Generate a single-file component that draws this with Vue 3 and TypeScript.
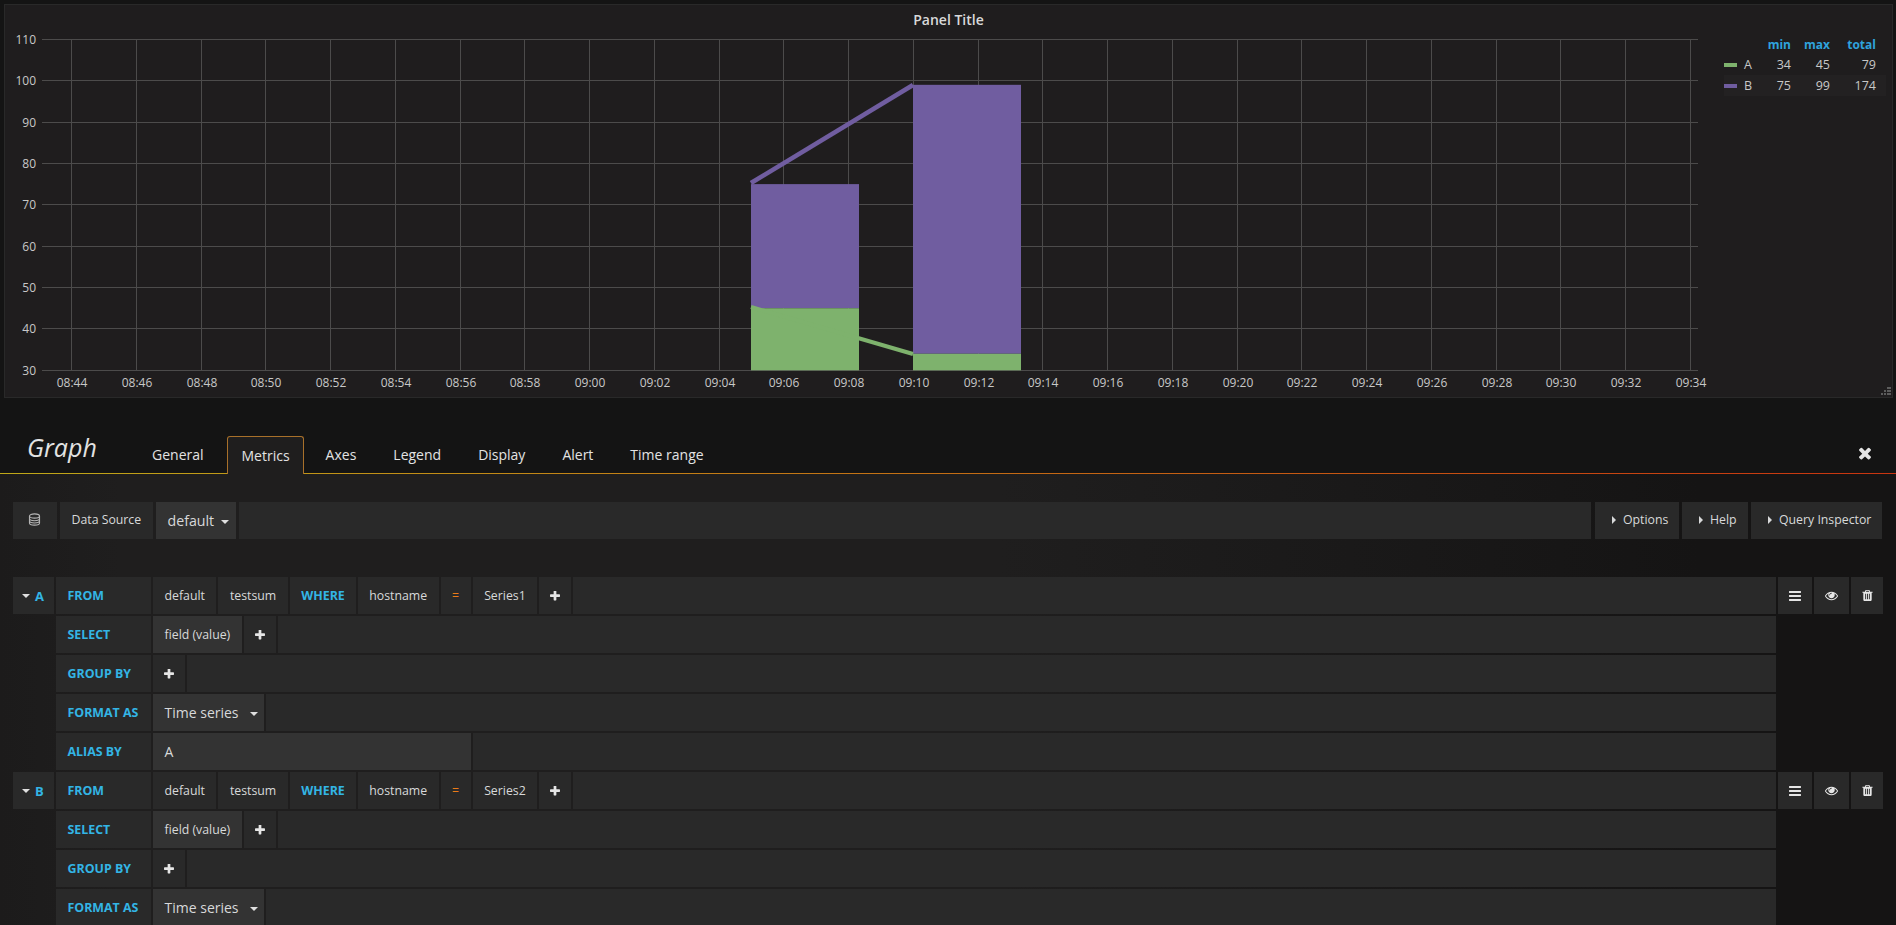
<template>
  <div class="page">
    <section class="panel">
      <div class="panel-title">Panel Title</div>
      <div class="graph-wrap">
        <svg class="chart" width="1705" height="365" viewBox="5 28 1705 365">
          <g class="grid">
            <line v-for="t in yTicks" :key="'h' + t.label" x1="42" x2="1698" :y1="t.y" :y2="t.y" />
            <line v-for="t in xTicks" :key="'v' + t.label" :x1="t.x" :x2="t.x" y1="39" y2="370" />
          </g>
          <g class="labels">
            <text v-for="t in yTicks" :key="'yl' + t.label" x="36" :y="t.y + 4" text-anchor="end">{{ t.label }}</text>
            <text v-for="t in xTicks" :key="'xl' + t.label" :x="t.x + 0.5" y="387" text-anchor="middle">{{ t.label }}</text>
          </g>
          <rect v-for="b in bars" :key="b.key" :x="b.x" :y="b.y" :width="108" :height="b.h" :fill="b.fill" />
          <polyline class="line-b" points="751,183 913,85" />
          <polyline class="line-a" points="751,307 913,354" />
        </svg>
        <div class="legend">
          <div class="legend-row legend-head">
            <span class="lg-name"></span>
            <span class="lg-num lg-min">min</span>
            <span class="lg-num lg-max">max</span>
            <span class="lg-num lg-total">total</span>
          </div>
          <div v-for="s in legend" :key="s.name" class="legend-row" :class="{ alt: s.alt }">
            <span class="lg-name"><i class="swatch" :class="s.swatch"></i>{{ s.name }}</span>
            <span class="lg-num lg-min">{{ s.min }}</span>
            <span class="lg-num lg-max">{{ s.max }}</span>
            <span class="lg-num lg-total">{{ s.total }}</span>
          </div>
        </div>
      </div>
      <svg class="resize" width="14" height="14" viewBox="0 0 14 14">
        <g fill="#5c5c5c">
          <rect x="9" y="4" width="2" height="2" /><rect x="11" y="4" width="2" height="2" />
          <rect x="6" y="7" width="2" height="2" /><rect x="9" y="7" width="2" height="2" /><rect x="11" y="7" width="2" height="2" />
          <rect x="3" y="10" width="2" height="2" /><rect x="6" y="10" width="2" height="2" /><rect x="9" y="10" width="2" height="2" /><rect x="11" y="10" width="2" height="2" />
        </g>
      </svg>
    </section>

    <header class="edit-head">
      <div class="edit-title">Graph</div>
      <nav class="tabs">
        <a v-for="t in tabs" :key="t" class="tab" :class="{ active: t === 'Metrics' }">{{ t }}</a>
      </nav>
      <svg class="close" width="18" height="18" viewBox="0 0 1792 1792">
        <path fill="#e6e6e6" d="M1490 1322q0 40-28 68l-136 136q-28 28-68 28t-68-28l-294-294-294 294q-28 28-68 28t-68-28l-136-136q-28-28-28-68t28-68l294-294-294-294q-28-28-28-68t28-68l136-136q28-28 68-28t68 28l294 294 294-294q28-28 68-28t68 28l136 136q28 28 28 68t-28 68l-294 294 294 294q28 28 28 68z" />
      </svg>
    </header>

    <main class="edit-body">
      <div class="toolbar">
        <div class="cell ds-icon">
          <svg width="13" height="13" viewBox="0 0 14 14" fill="none" stroke="#b4b4b4" stroke-width="1.2">
            <ellipse cx="7" cy="3.2" rx="5.4" ry="2.3" />
            <path d="M1.6 3.2v7.6c0 1.3 2.4 2.3 5.4 2.3s5.4-1 5.4-2.3V3.2" />
            <path d="M1.6 6c0 1.3 2.4 2.3 5.4 2.3S12.4 7.3 12.4 6" />
            <path d="M1.6 8.4c0 1.3 2.4 2.3 5.4 2.3s5.4-1 5.4-2.3" />
          </svg>
        </div>
        <div class="cell ds-label">Data Source</div>
        <div class="cell select ds-select">default<i class="caret-down"></i></div>
        <div class="cell filler"></div>
        <div class="cell tb-btn tb-options"><i class="caret-right"></i>Options</div>
        <div class="cell tb-btn tb-help"><i class="caret-right"></i>Help</div>
        <div class="cell tb-btn tb-inspector"><i class="caret-right"></i>Query Inspector</div>
      </div>

      <div class="queries">
        <div v-for="q in queries" :key="q.ref" class="query">
          <div v-for="(row, ri) in rowsOf(q)" :key="row.label" class="row">
            <div class="ref">
              <div v-if="ri === 0" class="cell ref-cell"><i class="caret-down small"></i>{{ q.ref }}</div>
            </div>
            <div class="cell key">{{ row.label }}</div>
            <template v-for="(c, ci) in row.cells" :key="ci">
              <div v-if="c.kind === 'plus'" class="cell plus">
                <svg width="10" height="10" viewBox="190 190 1412 1412">
                  <path fill="#e6e6e6" d="M1600 736v192q0 40-28 68t-68 28h-416v416q0 40-28 68t-68 28h-192q-40 0-68-28t-28-68v-416h-416q-40 0-68-28t-28-68v-192q0-40 28-68t68-28h416v-416q0-40 28-68t68-28h192q40 0 68 28t28 68v416h416q40 0 68 28t28 68z" />
                </svg>
              </div>
              <div v-else class="cell" :class="c.kind">{{ c.text }}<i v-if="c.kind === 'format'" class="caret-down"></i></div>
            </template>
            <div class="cell filler"></div>
            <div class="actions">
              <template v-if="ri === 0">
                <div class="cell act act-menu">
                  <svg width="12" height="12" viewBox="128 256 1536 1280">
                    <path fill="#e6e6e6" d="M1664 1344v128q0 26-19 45t-45 19h-1408q-26 0-45-19t-19-45v-128q0-26 19-45t45-19h1408q26 0 45 19t19 45zm0-512v128q0 26-19 45t-45 19h-1408q-26 0-45-19t-19-45v-128q0-26 19-45t45-19h1408q26 0 45 19t19 45zm0-512v128q0 26-19 45t-45 19h-1408q-26 0-45-19t-19-45v-128q0-26 19-45t45-19h1408q26 0 45 19t19 45z" />
                  </svg>
                </div>
                <div class="cell act act-eye">
                  <svg width="13" height="13" viewBox="0 0 1792 1792">
                    <path fill="#e6e6e6" d="M1664 960q-152-236-381-353 61 104 61 225 0 185-131.5 316.5t-316.5 131.5-316.5-131.5-131.5-316.5q0-121 61-225-229 117-381 353 133 205 333.5 326.5t434.5 121.5 434.5-121.5 333.5-326.5zm-720-384q0-20-14-34t-34-14q-125 0-214.5 89.5t-89.5 214.5q0 20 14 34t34 14 34-14 14-34q0-86 61-147t147-61q20 0 34-14t14-34zm848 384q0 34-20 69-140 230-376.5 368.5t-499.5 138.5-499.5-139-376.5-368q-20-35-20-69t20-69q140-229 376.5-368t499.5-139 499.5 139 376.5 368q20 35 20 69z" />
                  </svg>
                </div>
                <div class="cell act act-trash">
                  <svg width="13" height="13" viewBox="0 0 1792 1792">
                    <path fill="#e6e6e6" d="M704 1376v-704q0-14-9-23t-23-9h-64q-14 0-23 9t-9 23v704q0 14 9 23t23 9h64q14 0 23-9t9-23zm256 0v-704q0-14-9-23t-23-9h-64q-14 0-23 9t-9 23v704q0 14 9 23t23 9h64q14 0 23-9t9-23zm256 0v-704q0-14-9-23t-23-9h-64q-14 0-23 9t-9 23v704q0 14 9 23t23 9h64q14 0 23-9t9-23zm-544-992h448l-48-117q-7-9-17-11h-317q-10 2-17 11zm928 32v64q0 14-9 23t-23 9h-96v948q0 83-47 143.5t-113 60.5h-832q-66 0-113-58.5t-47-141.5v-952h-96q-14 0-23-9t-9-23v-64q0-14 9-23t23-9h309l70-167q15-37 54-63t79-26h320q40 0 79 26t54 63l70 167h309q14 0 23 9t9 23z" />
                  </svg>
                </div>
              </template>
            </div>
          </div>
        </div>
      </div>
    </main>
  </div>
</template>

<script setup lang="ts">
type Cell = { kind: string; text?: string }
type Row = { label: string; cells: Cell[] }
type Query = { ref: string; series: string; alias?: string }

const tabs = ['General', 'Metrics', 'Axes', 'Legend', 'Display', 'Alert', 'Time range']

// value -> pixel helpers for the plot area
const yOf = (v: number) => 370.3 - (v - 30) * 4.1375
const xOf = (i: number) => Math.round(71 + i * 64.76) + 0.5

const yTicks = [110, 100, 90, 80, 70, 60, 50, 40, 30].map((v) => ({
  label: String(v),
  y: Math.round(yOf(v) - 0.5) + 0.5,
}))

const xTicks = Array.from({ length: 26 }, (_, i) => {
  const mins = 8 * 60 + 44 + i * 2
  const hh = String(Math.floor(mins / 60)).padStart(2, '0')
  const mm = String(mins % 60).padStart(2, '0')
  return { label: `${hh}:${mm}`, x: xOf(i) }
})

const bars = [
  { key: 'b1', x: 751, y: yOf(75), h: yOf(45) - yOf(75), fill: '#705da0' },
  { key: 'a1', x: 751, y: yOf(45), h: yOf(30) - yOf(45), fill: '#7eb26d' },
  { key: 'b2', x: 913, y: yOf(99), h: yOf(34) - yOf(99), fill: '#705da0' },
  { key: 'a2', x: 913, y: yOf(34), h: yOf(30) - yOf(34), fill: '#7eb26d' },
]

const legend = [
  { name: 'A', swatch: 'green', min: 34, max: 45, total: 79, alt: false },
  { name: 'B', swatch: 'purple', min: 75, max: 99, total: 174, alt: true },
]

const queries: Query[] = [
  { ref: 'A', series: 'Series1', alias: 'A' },
  { ref: 'B', series: 'Series2' },
]

function rowsOf(q: Query): Row[] {
  const rows: Row[] = [
    {
      label: 'FROM',
      cells: [
        { kind: 'val', text: 'default' },
        { kind: 'val', text: 'testsum' },
        { kind: 'kw', text: 'WHERE' },
        { kind: 'val', text: 'hostname' },
        { kind: 'op', text: '=' },
        { kind: 'val', text: q.series },
        { kind: 'plus' },
      ],
    },
    {
      label: 'SELECT',
      cells: [{ kind: 'val lit', text: 'field (value)' }, { kind: 'plus' }],
    },
    { label: 'GROUP BY', cells: [{ kind: 'plus' }] },
    { label: 'FORMAT AS', cells: [{ kind: 'format', text: 'Time series' }] },
  ]
  if (q.alias) rows.push({ label: 'ALIAS BY', cells: [{ kind: 'alias', text: q.alias }] })
  return rows
}
</script>

<style>
html,
body {
  margin: 0;
  height: 100%;
  overflow: hidden;
  background: #141414;
}
</style>

<style scoped>
.page {
  width: 1896px;
  height: 925px;
  overflow: hidden;
  background: #141414;
  font-family: "Open Sans", "Liberation Sans", sans-serif;
  color: #d8d9da;
  display: flex;
  flex-direction: column;
}

/* graph panel */
.panel {
  position: relative;
  box-sizing: border-box;
  height: 394px;
  margin: 4px 3px 0 4px;
  flex-shrink: 0;
  background: #1f1d1e;
  border: 1px solid #292929;
}

.panel-title {
  height: 23px;
  line-height: 29px;
  text-align: center;
  font-size: 14px;
  font-weight: 600;
  color: #d8d9da;
}

.graph-wrap {
  display: flex;
}

.chart {
  display: block;
  flex-shrink: 0;
}

.grid line {
  stroke: #4c4b4b;
  stroke-width: 1;
}

.labels text {
  font-size: 12px;
  fill: #c8c8c8;
}

.line-a,
.line-b {
  fill: none;
}

.line-a {
  stroke: #7eb26d;
  stroke-width: 4;
}

.line-b {
  stroke: #705da0;
  stroke-width: 4.6;
}

.legend {
  margin-left: 14px;
  width: 162px;
  font-size: 12.5px;
  color: #c8c8c8;
}

.legend-row {
  display: flex;
  height: 20px;
  line-height: 20px;
  align-items: center;
}

.legend-row.alt {
  height: 21px;
  background: #232122;
}

.legend-head {
  margin-top: 7px;
  color: #2fa3dc;
  font-weight: 700;
  font-size: 12px;
}

.lg-name {
  display: flex;
  align-items: center;
  width: 30px;
}

.swatch {
  display: block;
  width: 13px;
  height: 4px;
  margin-right: 7px;
}

.swatch.green {
  background: #7eb26d;
}

.swatch.purple {
  background: #705da0;
}

.lg-num {
  text-align: right;
}

.lg-min {
  width: 37px;
}

.lg-max {
  width: 39px;
}

.lg-total {
  width: 46px;
}

.resize {
  position: absolute;
  right: 0;
  bottom: 0;
}

/* editor header */
.edit-head {
  position: relative;
  box-sizing: border-box;
  height: 76px;
  flex-shrink: 0;
  display: flex;
  align-items: flex-end;
  border-bottom: 1px solid;
  border-image: linear-gradient(to right, #c0a818, #c83410) 1;
  z-index: 1;
}

.edit-title {
  position: absolute;
  left: 27px;
  top: 33px;
  font-size: 25px;
  font-style: italic;
  line-height: 32px;
  color: #e3e3e3;
}

.tabs {
  display: flex;
  gap: 6px;
  margin-left: 137px;
  margin-bottom: -1px;
}

.tab {
  box-sizing: border-box;
  height: 38px;
  line-height: 36px;
  padding: 0 14px;
  font-size: 14px;
  color: #e3e3e3;
  border: 1px solid transparent;
  border-bottom: none;
}

.tab.active {
  margin-left: 2px;
  padding-right: 13px;
  background: #1f1e1e;
  border-color: #a8702a;
  border-radius: 3px 3px 0 0;
  line-height: 38px;
}

.tab.active ~ .tab {
  margin-left: 1px;
}

.close {
  position: absolute;
  right: 22px;
  top: 46px;
}

/* editor body */
.edit-body {
  flex: 1;
  padding: 28px 13px 0;
  background: linear-gradient(to right, #1c1b1b 0, #1f1e1e 120px, #1f1e1e 1000px, #151414 1700px);
}

.cell {
  box-sizing: border-box;
  height: 37px;
  display: flex;
  align-items: center;
  padding: 0 11.5px;
  background: #292929;
  font-size: 12.3px;
  color: #d8d9da;
  white-space: nowrap;
  flex-shrink: 0;
}

.filler {
  flex: 1;
  min-width: 0;
}

.toolbar {
  display: flex;
  gap: 3px;
  margin-bottom: 38px;
  padding-right: 1px;
}

.ds-icon {
  width: 44px;
  justify-content: center;
  padding: 0 2px 2px 0;
}

.ds-label {
  width: 93px;
  padding-bottom: 2px;
}

.select {
  background: #333333;
  font-size: 14.2px;
}

.ds-select {
  width: 80px;
  padding-bottom: 1px;
}

.tb-options {
  width: 84px;
  margin-left: 1px;
}

.tb-help {
  width: 66px;
}

.tb-inspector {
  width: 131px;
}

.tb-btn {
  padding: 0 0 2px 17px;
}

.caret-down {
  display: inline-block;
  width: 0;
  height: 0;
  margin-left: 7px;
  margin-top: 3px;
  border-left: 4px solid transparent;
  border-right: 4px solid transparent;
  border-top: 4px solid #e0e0e0;
}

.caret-right {
  display: inline-block;
  width: 0;
  height: 0;
  margin-right: 7px;
  border-top: 4px solid transparent;
  border-bottom: 4px solid transparent;
  border-left: 4px solid #d8d9da;
}

.row {
  display: flex;
  gap: 2px;
  margin-bottom: 2px;
}

.ref {
  width: 41px;
  flex-shrink: 0;
}

.ref-cell {
  width: 41px;
  padding: 0 0 0 9px;
  color: #33b5e5;
  font-weight: 700;
  font-size: 13px;
}

.caret-down.small {
  margin: 1px 5px 0 0;
}

.key {
  width: 95px;
  color: #33b5e5;
  font-weight: 700;
  font-size: 12.4px;
}

.kw {
  width: 66px;
  padding-right: 0;
  color: #33b5e5;
  font-weight: 700;
  font-size: 12.4px;
}

.op {
  width: 30px;
  justify-content: center;
  padding: 0;
  color: #eb7b18;
}

.lit {
  background: #333333;
}

.plus {
  width: 32px;
  justify-content: center;
  padding: 0;
}

.format {
  width: 111px;
  background: #333333;
  font-size: 14px;
}

.format .caret-down {
  margin-left: 11px;
}

.alias {
  width: 318px;
  background: #333333;
  font-size: 14px;
}

.actions {
  display: flex;
  gap: 2px;
  width: 105px;
  flex-shrink: 0;
}

.act {
  justify-content: center;
  padding: 0;
}

.act-menu {
  width: 34px;
}

.act-eye {
  width: 35px;
}

.act-trash {
  width: 32px;
}
</style>
